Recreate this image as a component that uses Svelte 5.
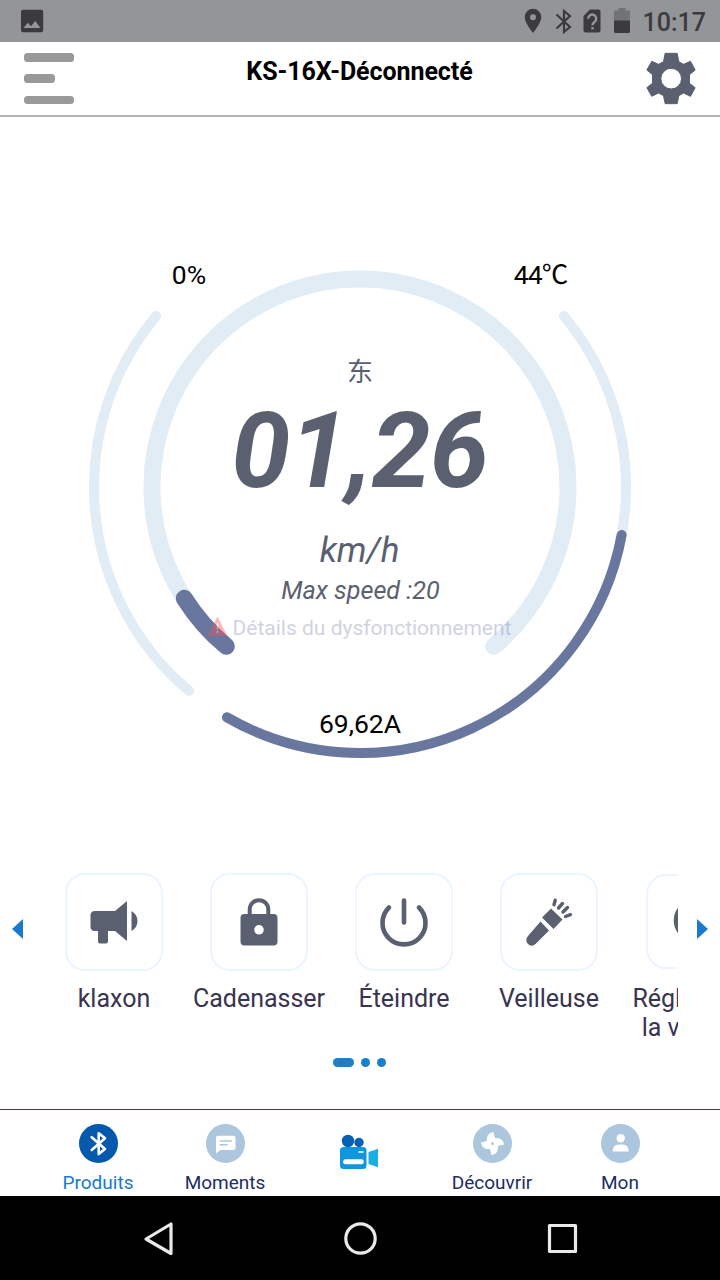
<script lang="ts">
  type Action = { id: string; label: string };

  const actions: Action[] = [
    { id: 'horn', label: 'klaxon' },
    { id: 'lock', label: 'Cadenasser' },
    { id: 'power', label: 'Éteindre' },
    { id: 'light', label: 'Veilleuse' },
    { id: 'speed', label: 'Réglage de la vitesse' }
  ];

  const tabs = [
    { id: 'products', label: 'Produits' },
    { id: 'moments', label: 'Moments' },
    { id: 'video', label: '' },
    { id: 'discover', label: 'Découvrir' },
    { id: 'me', label: 'Mon' }
  ];

  let active = $state('products');

  const speed = 1.26;
  const maxSpeed = 20;
  const cx = 360;
  const cy = 370;

  // angles in degrees, clockwise from 3 o'clock
  function arc(r: number, from: number, to: number) {
    const pt = (a: number) => {
      const t = (a * Math.PI) / 180;
      return `${(cx + r * Math.cos(t)).toFixed(2)} ${(cy + r * Math.sin(t)).toFixed(2)}`;
    };
    return `M${pt(from)}A${r} ${r} 0 ${to - from > 180 ? 1 : 0} 1 ${pt(to)}`;
  }

  const speedEnd = 130 + (280 * speed) / maxSpeed;
</script>

<div class="screen">
  <div class="status">
    <svg class="pic" width="24" height="24" viewBox="0 0 24 24">
      <path fill-rule="evenodd" d="M3 .7h18.200q2 0 2 2v18.600q0 2-2 2H3q-2 0-2-2V2.700q0-2 2-2zM3.500 19h17L15.300 12l-4.300 5.300-3.200-3.600z" />
    </svg>
    <svg width="18" height="26" viewBox="0 0 18 26">
      <path fill-rule="evenodd" d="M9 .8a8.300 8.300 0 0 0-8.300 8.300C.7 15.300 9 25 9 25s8.300-9.700 8.300-15.900A8.300 8.300 0 0 0 9 .8zM9 6.200a3 3 0 1 1 0 6 3 3 0 0 1 0-6z" />
    </svg>
    <svg class="bt" width="16" height="26" viewBox="0 0 16 26">
      <path fill="none" stroke="#3b3b3d" stroke-width="2.200" d="M1.500 6.500L15 19 9 24V3L15 8 1.500 20.500" />
    </svg>
    <svg class="sim" width="18" height="24" viewBox="0 0 18 24">
      <path d="M7 .5h8.500q2 0 2 2v19q0 2-2 2h-13q-2 0-2-2V7z" />
      <path fill="none" stroke="#949599" stroke-width="2.400" d="M5.200 9.700a4 4 0 1 1 6.500 3q-2.200 1.500-2.200 3.500M9.500 18v2.600" />
    </svg>
    <svg class="bat" width="16" height="26" viewBox="0 0 16 26">
      <path fill="#727376" d="M4.500 0h7v2.500H16V13H0V2.500h4.500z" />
      <path d="M0 12.500h16V23.500q0 1.500-1.500 1.500h-13Q0 25 0 23.500z" />
    </svg>
    <span>10:17</span>
  </div>

  <header>
    <button type="button" aria-label="Menu" class="menu"><i></i><i class="short"></i><i></i></button>
    <h1>KS-16X-Déconnecté</h1>
    <button type="button" aria-label="Options" class="gear">
      <svg width="50" height="51" viewBox="0 0 147 153">
        <path fill-rule="evenodd" stroke="#5b6070" stroke-width="3" stroke-linejoin="round" d="M56 1h36l5 25 14 8 21-9 14 26-17 14v26l17 13-14 26-21-10-14 8-5 24H56l-5-24-15-8-20 10-15-26 17-13V65L1 51l15-26 20 9 15-8zM74 46a31 31 0 1 0 0 62 31 31 0 0 0 0-62z" />
      </svg>
    </button>
  </header>

  <main>
    <svg class="gauge" width="720" height="743" viewBox="0 0 720 743">
      <g fill="none" stroke-linecap="round">
        <g stroke="#e1ecf5">
          <path stroke-width="17" d={arc(208, 130, 410)} />
          <path stroke-width="10" d={arc(266, 130, 220)} />
          <path stroke-width="10" d={arc(266, -40, 120)} />
        </g>
        <g stroke="#69779f">
          <path stroke-width="17" d={arc(208, 130, speedEnd)} />
          <path stroke-width="10" d={arc(266, 10.400, 120)} />
        </g>
      </g>
      <g class="val">
        <text x="189" y="167">0%</text>
        <text class="temp" x="540.500" y="167">44℃</text>
        <text x="360" y="616">69,62A</text>
      </g>
      <g class="read">
        <text class="dir" x="360" y="264">东</text>
        <text class="speed" x="359.500" y="370">01,26</text>
        <text class="unit" x="359.500" y="445">km/h</text>
        <text class="max" x="360.500" y="482">Max speed :{maxSpeed}</text>
      </g>
      <g class="fault">
        <path fill="#ff4d55" d="M217.500 500.500L226.500 518.500H208.500z" stroke="#ff4d55" stroke-linejoin="round" />
        <path stroke="#fff" stroke-width="1.500" d="M217.500 506v6.500M217.500 514v2" />
        <text x="372" y="518">Détails du dysfonctionnement</text>
      </g>
    </svg>

    <section class="carousel">
      <span class="arrow left"></span>
      <div class="strip">
        {#each actions as a (a.id)}
          <div class="item">
            <button type="button" class="card" class:small={a.id === 'speed'} aria-label={a.label}>
              <svg width="50" height="50" viewBox="0 0 50 50">
                {#if a.id === 'horn'}
                  <path d="M6 11h20L38 1v40L26 31h-7v10.500q0 2-2 2h-6q-2 0-2-2V31H6q-4.500 0-4.500-4.500v-11Q1.500 11 6 11zM42.500 11q6 3.500 6 10t-6 10z" />
                {:else if a.id === 'lock'}
                  <path fill="none" stroke="#5b6070" stroke-width="4" d="M15.700 15V9.500a9.300 9.300 0 0 1 18.600 0V15" />
                  <path fill-rule="evenodd" d="M10.500 14h29q4 0 4 4v23.500q0 4-4 4h-29q-4 0-4-4V18q0-4 4-4zM25 25a4.800 4.800 0 1 0 0 9.600 4.800 4.800 0 0 0 0-9.600z" />
                {:else if a.id === 'power'}
                  <path fill="none" stroke="#5b6070" stroke-width="4.600" stroke-linecap="round" d="M10 7.500a21.500 21.500 0 1 0 30 0M25 .5v22" />
                {:else if a.id === 'light'}
                  <path d="M16.500 21.500L25 30.500 11.500 44q-4 3.500-7.500 0t0-8zM27 8.500L38.500 19.500 29.500 29 18 17.500z" />
                  <path fill="none" stroke="#5b6070" stroke-width="3.400" stroke-linecap="round" d="M30 4.800L31.200 .2M34.500 8l4-4.500M39 12L43.500 7.500M41.500 16.500l5-1.800" />
                {:else}
                  <circle cx="26" cy="21.500" r="19" fill="none" stroke="#5b6070" stroke-width="4.500" />
                {/if}
              </svg>
            </button>
            <span class="label">{a.label}</span>
          </div>
        {/each}
      </div>
      <span class="arrow right"></span>
    </section>

    <div class="dots"><i class="on"></i><i></i><i></i></div>
  </main>

  <nav class="tabs">
    {#each tabs as t (t.id)}
      <button type="button" class:active={active === t.id} aria-label={t.label || t.id} onclick={() => (active = t.id)}>
        {#if t.id === 'video'}
          <svg class="cam" width="40" height="36" viewBox="0 0 40 36">
            <circle cx="9" cy="7" r="6.200" fill="#0560b4" />
            <circle cx="20" cy="8.500" r="4.700" fill="#0560b4" />
            <rect x="1" y="13" width="26.500" height="22" rx="3.500" fill="#1296db" />
            <rect x="4.200" y="25.200" width="20.500" height="5" rx="2" fill="#fff" />
            <path stroke="#fff" stroke-width="1.600" stroke-linecap="round" d="M20 18h4" />
            <path fill="#1bade5" d="M29.500 18l9.500-3.200v18.500L29.500 30z" />
          </svg>
        {:else}
          <svg width="39" height="39" viewBox="0 0 39 39">
            <circle cx="19.500" cy="19.500" r="19.500" class="disc" />
            {#if t.id === 'products'}
              <path fill="none" stroke="#fff" stroke-width="2.600" stroke-linejoin="round" stroke-linecap="round" d="M12.700 13.200L26 25 19.700 30V9.300L26 14.200 12.700 26" />
            {:else if t.id === 'moments'}
              <path fill="#fff" d="M12 11.800h15.500q2 0 2 2V24q0 2-2 2H14.500L10 29.500V13.800q0-2 2-2z" />
              <path stroke="#acc6de" stroke-width="1.400" stroke-linecap="round" d="M14.200 17h11.200M14.200 20.800h7" />
            {:else if t.id === 'discover'}
              <g fill="#fff">
                {#each [0, 90, 180, 270] as r}
                  <path transform="rotate({r} 19.500 19.500)" d="M18 22C12 19 12.500 8.500 20.800 8 20.500 11.500 23.500 14.500 22 20z" />
                {/each}
              </g>
              <circle cx="19.500" cy="19.500" r="1.500" fill="#acc6de" />
            {:else}
              <circle cx="19.700" cy="14.200" r="4.200" fill="#fff" />
              <path fill="#fff" d="M11.700 27.500q0-7 6-7h4q6 0 6 7z" />
            {/if}
          </svg>
          <span>{t.label}</span>
        {/if}
      </button>
    {/each}
  </nav>

  <div class="sysnav">
    <svg width="720" height="84" viewBox="0 0 720 84">
      <g fill="none" stroke="#eaeaea" stroke-width="3.200" stroke-linejoin="round">
        <path d="M146 43L171 28v29.500z" />
        <circle cx="360.500" cy="42.500" r="14.700" />
        <rect x="549.500" y="29.500" width="26" height="26" />
      </g>
    </svg>
  </div>
</div>

<style>
:global(body){margin:0;background:#fff}
.screen{width:720px;height:1280px;display:flex;flex-direction:column;overflow:hidden;background:#fff;font-family:Roboto,"Noto Sans CJK SC",sans-serif}
button{padding:0;border:0;background:none;font:inherit;color:inherit}
svg{display:block;flex:none;overflow:visible}
.status{height:42px;box-sizing:border-box;flex:none;display:flex;align-items:center;background:#949599;fill:#3b3b3d;color:#3b3b3d;padding:0 14px 0 20px}
.status .pic{margin-right:auto}
.status .bt{margin-left:13px}
.status .sim{margin-left:12px}
.status .bat{margin:0 13px 0 13px}
.status span{font-size:25px;font-weight:500;line-height:42px;padding-top:3px}
header{height:75px;box-sizing:border-box;flex:none;display:grid;grid-template-columns:50px 1fr 50px;padding:0 24px;border-bottom:2px solid #b2b2b2}
header h1{margin:0;padding-right:1px;font-size:25px;font-weight:700;line-height:59px;letter-spacing:-.07px;text-align:center;color:#000}
.menu{display:flex;flex-direction:column;justify-content:space-between;height:51px;margin-top:11px}
.menu i{width:50px;height:8.500px;border-radius:3.500px;background:#999}
.menu .short{width:31px}
.gear{height:51px;margin-top:11px;fill:#5b6070}
main{height:992px;flex:none}
.gauge text{text-anchor:middle}
.val{font-size:26.500px;fill:#000}
.val .temp{letter-spacing:-1px}
.read{fill:#5b6070;font-style:italic}
.dir{font-size:26px;font-style:normal}
.speed{font-size:106px;font-weight:700;letter-spacing:-1px}
.unit{font-size:35px}
.max{font-size:25.200px}
.fault{opacity:.4}
.fault text{font-size:21px;fill:#8c90b8}
.carousel{display:flex;justify-content:space-between;padding:13px 12px 0;height:172px}
.arrow{width:0;height:0;margin-top:46px;border:10.500px solid transparent}
.left{border-left:0;border-right:11px solid #1a7ac9}
.right{border-right:0;border-left:11px solid #1a7ac9}
.strip{width:637px;margin-right:1px;display:flex;overflow:hidden}
.item{width:145px;flex:none;display:flex;flex-direction:column;align-items:center}
.card{width:98px;height:98px;box-sizing:border-box;border:2px solid #ebf4ff;border-radius:20px;display:grid;place-items:center;fill:#5b6070;flex:none}
.card svg{margin:5px 0 0 1px}
.card.small{width:96px;height:95px;margin:1px 0 2px}
.label{width:134px;margin-top:13px;padding-left:1px;font-size:25px;line-height:29px;color:#39344f;text-align:center}
.dots{display:flex;justify-content:center;gap:7px;padding:13px 1px 0 0}
.dots i{width:9px;height:9px;border-radius:5px;background:#1a7fcc}
.dots .on{width:21px}
.tabs{height:87px;box-sizing:border-box;flex:none;display:grid;grid-template-columns:128px 126px 142px 124px 132px;padding:0 34px;border-top:1px solid #3f3b62}
.tabs button{display:flex;flex-direction:column;align-items:center;padding-top:14px;font-size:19px;line-height:22px;color:#1e2d62}
.tabs span{margin-top:9px}
.tabs .active{color:#1a7ac9}
.disc{fill:#acc6de}
.active .disc{fill:#0459ac}
.cam{margin-top:10px}
.sysnav{height:84px;flex:none;background:#000}
</style>
